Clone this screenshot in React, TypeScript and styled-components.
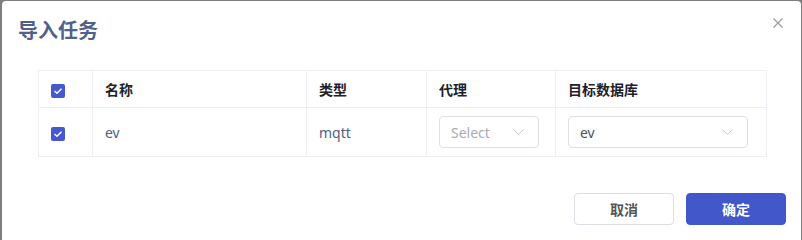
import React from "react";
import styled, { createGlobalStyle } from "styled-components";

const Global = createGlobalStyle`
  html, body { margin: 0; padding: 0; }
  body {
    background: #7f7f7f;
    font-family: "Noto Sans", "Noto Sans CJK SC", sans-serif;
    overflow: hidden;
  }
  #root { height: 240px; }
`;

const Dialog = styled.div`
  margin: 1px 0 0 2px;
  width: 799px;
  height: 239px;
  background: #fff;
  border-radius: 4px 4px 0 0;
  position: relative;
  box-sizing: border-box;
  overflow: hidden;
`;

const Header = styled.div`
  padding: 16px 16px 16px 16px;
  display: flex;
  align-items: center;
`;

const Title = styled.h2`
  margin: 0;
  font-size: 20px;
  line-height: 28px;
  font-weight: 600;
  color: #4f6089;
`;

const Close = styled.button`
  position: absolute;
  right: 17px;
  top: 16px;
  width: 12px;
  height: 12px;
  padding: 0;
  border: none;
  background: none;
  display: flex;
  align-items: center;
  justify-content: center;
`;

const Body = styled.div`
  padding: 9px 35px 0 36px;
`;

const Table = styled.table`
  border-collapse: collapse;
  width: 728px;
  table-layout: fixed;
  font-size: 14px;
`;

const Th = styled.th<{ $w: number }>`
  width: ${(p) => p.$w}px;
  height: 37px;
  border: 1px solid #ebeef5;
  text-align: left;
  padding: 0 12px;
  font-weight: 700;
  color: #1d2129;
  box-sizing: border-box;
`;

const Td = styled.td`
  height: 49px;
  border: 1px solid #ebeef5;
  padding: 0 12px;
  color: #4e5e86;
  box-sizing: border-box;
`;

const Check = styled.span`
  display: inline-flex;
  width: 14px;
  height: 14px;
  background: #4558d0;
  border-radius: 2px;
  align-items: center;
  justify-content: center;
  vertical-align: middle;
`;

const Select = styled.div<{ $w: number; $placeholder?: boolean }>`
  width: ${(p) => p.$w}px;
  height: 32px;
  box-sizing: border-box;
  border: 1px solid #dcdfe6;
  border-radius: 4px;
  display: flex;
  align-items: center;
  justify-content: space-between;
  padding: 0 14px 0 11px;
  color: ${(p) => (p.$placeholder ? "#a8abb2" : "#4a4f5a")};
  font-size: 14px;
`;

const Footer = styled.div`
  display: flex;
  justify-content: flex-end;
  gap: 12px;
  padding: 36px 15px 0 0;
`;

const Button = styled.button<{ $primary?: boolean }>`
  width: 100px;
  height: 32px;
  border-radius: 4px;
  box-sizing: border-box;
  font-family: inherit;
  font-size: 14px;
  font-weight: 700;
  border: 1px solid ${(p) => (p.$primary ? "#4257c9" : "#dcdfe6")};
  background: ${(p) => (p.$primary ? "#4257c9" : "#fff")};
  color: ${(p) => (p.$primary ? "#fff" : "#555")};
`;

const Tick = () => (
  <svg width="10" height="8" viewBox="0 0 10 8">
    <path d="M1.5 4 L4 6.3 L8.5 1.7" stroke="#fff" strokeWidth="1.4" fill="none" />
  </svg>
);

const Chevron = () => (
  <svg width="11" height="6" viewBox="0 0 11 6">
    <path d="M0.5 0.5 L5.5 5.3 L10.5 0.5" stroke="#c0c4cc" strokeWidth="1" fill="none" />
  </svg>
);

export default function App() {
  return (
    <>
      <Global />
      <Dialog>
        <Header>
          <Title>导入任务</Title>
        </Header>
        <Close aria-label="close">
          <svg width="10" height="10" viewBox="0 0 10 10">
            <path d="M0.5 0.5 L9.5 9.5 M9.5 0.5 L0.5 9.5" stroke="#9a9a9a" strokeWidth="1.1" />
          </svg>
        </Close>
        <Body>
          <Table>
            <thead>
              <tr>
                <Th $w={54}>
                  <Check><Tick /></Check>
                </Th>
                <Th $w={214}>名称</Th>
                <Th $w={120}>类型</Th>
                <Th $w={129}>代理</Th>
                <Th $w={211}>目标数据库</Th>
              </tr>
            </thead>
            <tbody>
              <tr>
                <Td>
                  <Check><Tick /></Check>
                </Td>
                <Td>ev</Td>
                <Td>mqtt</Td>
                <Td>
                  <Select $w={100} $placeholder>
                    <span>Select</span>
                    <Chevron />
                  </Select>
                </Td>
                <Td>
                  <Select $w={180}>
                    <span>ev</span>
                    <Chevron />
                  </Select>
                </Td>
              </tr>
            </tbody>
          </Table>
        </Body>
        <Footer>
          <Button>取消</Button>
          <Button $primary>确定</Button>
        </Footer>
      </Dialog>
    </>
  );
}
